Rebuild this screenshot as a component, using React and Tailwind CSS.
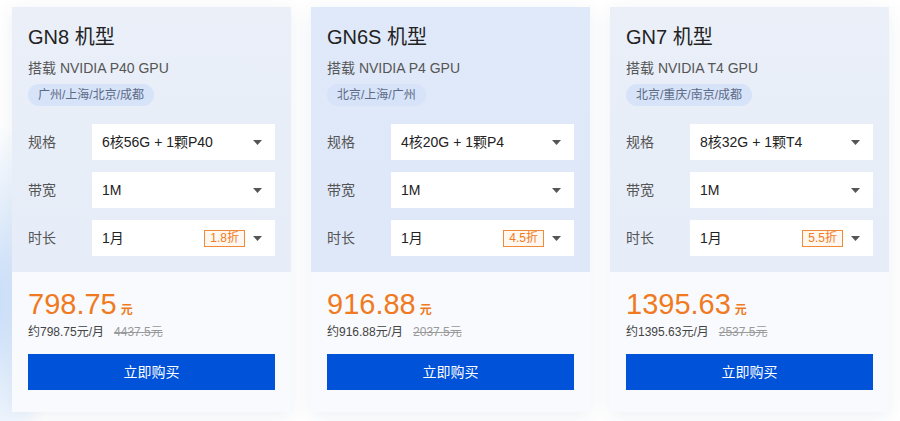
import React from "react";

const cards = [
  {
    name: "GN8 机型",
    gpu: "搭载 NVIDIA P40 GPU",
    region: "广州/上海/北京/成都",
    spec: "6核56G + 1颗P40",
    discount: "1.8折",
    price: "798.75",
    monthly: "约798.75元/月",
    original: "4437.5元",
    top: "bg-[linear-gradient(180deg,#eaeff8_0%,#e6edf8_100%)]",
  },
  {
    name: "GN6S 机型",
    gpu: "搭载 NVIDIA P4 GPU",
    region: "北京/上海/广州",
    spec: "4核20G + 1颗P4",
    discount: "4.5折",
    price: "916.88",
    monthly: "约916.88元/月",
    original: "2037.5元",
    top: "bg-[linear-gradient(180deg,#e0e9f9_0%,#dfe8f8_100%)]",
  },
  {
    name: "GN7 机型",
    gpu: "搭载 NVIDIA T4 GPU",
    region: "北京/重庆/南京/成都",
    spec: "8核32G + 1颗T4",
    discount: "5.5折",
    price: "1395.63",
    monthly: "约1395.63元/月",
    original: "2537.5元",
    top: "bg-[linear-gradient(180deg,#eaeff8_0%,#e6edf8_100%)]",
  },
];

const Caret = () => (
  <svg width="9" height="5" viewBox="0 0 9 5" className="shrink-0">
    <path d="M0 0h9L4.5 5z" fill="#555" />
  </svg>
);

const Row = ({ label, value, discount }) => (
  <div className="flex items-center">
    <span className="w-16 text-[14px] text-[#555]">{label}</span>
    <div className="flex h-9 flex-1 items-center bg-white pl-[10px] pr-[13px]">
      <span className="flex-1 text-[14px] text-[#222]">{value}</span>
      {discount && (
        <span className="mr-[8px] flex h-[17px] items-center border border-[#f08a3a] bg-[#fff8f1] px-[5px] text-[12px] leading-none text-[#f07a21]">
          {discount}
        </span>
      )}
      <Caret />
    </div>
  </div>
);

const Card = ({ c }) => (
  <div className="flex w-[279px] flex-col bg-[#f8fafd] shadow-[0_4px_18px_rgba(30,60,120,0.08)]">
    <div className={`px-4 pt-4 pb-4 ${c.top}`}>
      <h3 className="text-[20px] leading-7 text-[#222]">{c.name}</h3>
      <p className="mt-[7px] text-[14px] leading-5 text-[#555]">{c.gpu}</p>
      <div className="mt-[6px] flex">
        <span className="flex h-[22px] items-center rounded-full bg-[#d6e3f9] px-[10px] text-[12px] text-[#5d6a85]">
          {c.region}
        </span>
      </div>
      <div className="mt-[18px] flex flex-col gap-3">
        <Row label="规格" value={c.spec} />
        <Row label="带宽" value="1M" />
        <Row label="时长" value="1月" discount={c.discount} />
      </div>
    </div>
    <div className="px-4 pt-[15px] pb-[22px]">
      <div className="flex items-baseline text-[#f07a21]">
        <span className="text-[29px] leading-[34px]">{c.price}</span>
        <span className="ml-[4px] text-[12px] font-bold">元</span>
      </div>
      <div className="mt-[1px] flex items-center gap-[10px] text-[12px] leading-5">
        <span className="text-[#444]">{c.monthly}</span>
        <span className="text-[#999] line-through">{c.original}</span>
      </div>
      <button className="mt-[12px] flex h-9 w-full items-center justify-center bg-[#0052d9] text-[14px] text-white">
        立即购买
      </button>
    </div>
  </div>
);

export default function App() {
  return (
    <div
      className="h-[421px] w-[900px] overflow-hidden bg-[radial-gradient(ellipse_70px_180px_at_-10px_300px,#c4dcfa_0%,#e3eefc_50%,#ffffff_100%)] pl-3 pt-[7px]"
      style={{ fontFamily: '"Liberation Sans", "Noto Sans CJK SC", sans-serif' }}
    >
      <div className="flex gap-5">
        {cards.map((c) => (
          <Card key={c.name} c={c} />
        ))}
      </div>
    </div>
  );
}
